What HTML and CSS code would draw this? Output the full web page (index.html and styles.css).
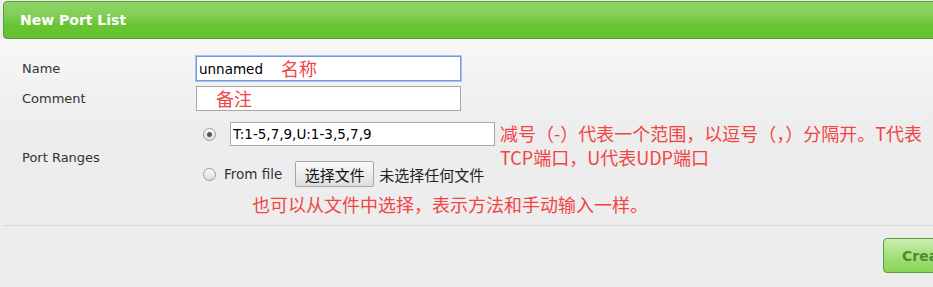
FILE: index.html
```html
<!DOCTYPE html>
<html lang="en">
<head>
  <meta charset="UTF-8" />
  <meta name="viewport" content="width=device-width, initial-scale=1.0" />
  <title>New Port List</title>
  <link rel="stylesheet" href="styles.css">
</head>
<body>
  <div class="panel-head">
    <h2 class="heading">New Port List</h2>
  </div>
  <div class="panel-body">
    <div class="form-row">
      <label class="form-label">Name</label>
      <div class="form-field">
        <input type="text" class="text-input focused" value="unnamed" />
        <span class="note note-name">名称</span>
      </div>
    </div>
    <div class="form-row">
      <label class="form-label">Comment</label>
      <div class="form-field">
        <input type="text" class="text-input" value="" />
        <span class="note note-comment">备注</span>
      </div>
    </div>
    <div class="form-row port-row">
      <label class="form-label port-label">Port Ranges</label>
      <div class="form-field">
        <div class="choice">
          <input type="radio" name="from" class="radio" checked />
          <input type="text" class="text-input port-input" value="T:1-5,7,9,U:1-3,5,7,9" />
          <span class="note note-port">减号（-）代表一个范围，以逗号（，）分隔开。T代表<br />TCP端口，U代表UDP端口</span>
        </div>
        <div class="choice file-choice">
          <input type="radio" name="from" class="radio" />
          <span class="choice-text">From file</span>
          <button class="file-btn">选择文件</button>
          <span class="file-name">未选择任何文件</span>
        </div>
        <div class="note note-file">也可以从文件中选择，表示方法和手动输入一样。</div>
      </div>
    </div>
    <div class="actions">
      <button class="btn-create">Create</button>
    </div>
  </div>
</body>
</html>
```

FILE: styles.css
```css
html, body {
  margin: 0;
  height: 100%;
  overflow: hidden;
}
body {
  font-family: "DejaVu Sans", sans-serif;
  font-size: 13px;
  color: #333;
  background: #ededed;
  padding-top: 1px;
}
.panel-head {
  margin-left: 3px;
  width: 960px;
  height: 36px;
  border: 1px solid #5a9a3b;
  border-radius: 4px;
  background: linear-gradient(#8fd466 0%, #82cf58 35%, #68c432 65%, #63c22e 100%);
  display: flex;
  align-items: center;
}
.heading {
  margin: 0 0 0 16px;
  font-size: 14px;
  font-weight: bold;
  color: #fff;
}
.panel-body {
  background: linear-gradient(#f8f8f8 0px, #f1f1f1 50px, #ededed 90px);
  padding-top: 17px;
}
.form-row {
  display: flex;
  align-items: center;
  margin-bottom: 5px;
}
.form-label {
  width: 196px;
  padding-left: 22px;
  box-sizing: border-box;
  flex-shrink: 0;
}
.form-field {
  position: relative;
}
.text-input {
  width: 265px;
  height: 25px;
  box-sizing: border-box;
  border: 1px solid #a9a9a9;
  background: #fff;
  font-family: "DejaVu Sans", sans-serif;
  font-size: 13.5px;
  color: #000;
  padding: 0 2px;
  margin: 0;
  outline: none;
}
.text-input.focused {
  border-color: #6e9ae6;
  box-shadow: 0 0 0 1px #a8c3f2;
}
.note {
  font-family: "Noto Sans CJK SC", sans-serif;
  font-size: 18px;
  line-height: 24px;
  color: #f24444;
  white-space: nowrap;
}
.note-name {
  position: absolute;
  left: 85px;
  top: 0;
}
.note-comment {
  position: absolute;
  left: 20px;
  top: 0;
}
.port-row {
  align-items: flex-start;
  margin-top: 11px;
}
.port-label {
  padding-top: 28px;
}
.choice {
  display: flex;
  align-items: center;
  position: relative;
}
.radio {
  appearance: none;
  -webkit-appearance: none;
  width: 13px;
  height: 13px;
  margin: 0 14px 0 7px;
  border: 1px solid #9a9a9a;
  border-radius: 50%;
  background: linear-gradient(#fdfdfd, #dcdcdc);
  box-sizing: border-box;
  position: relative;
}
.radio:checked::after {
  content: "";
  position: absolute;
  left: 3px;
  top: 3px;
  width: 5px;
  height: 5px;
  border-radius: 50%;
  background: #555;
}
.port-input {
  height: 24px;
}
.note-port {
  position: absolute;
  left: 304px;
  top: -1px;
}
.file-choice {
  margin-top: 15px;
}
.file-choice .radio {
  margin-right: 8px;
}
.choice-text {
  color: #333;
  font-size: 13.5px;
}
.file-btn {
  margin-left: 13px;
  width: 79px;
  height: 26px;
  border: 1px solid #a6a6a6;
  border-radius: 2px;
  background: linear-gradient(#fafafa, #dedede);
  font-family: "Noto Sans CJK SC", sans-serif;
  font-size: 15px;
  color: #111;
  padding: 0;
}
.file-name {
  margin-left: 5px;
  font-family: "Noto Sans CJK SC", sans-serif;
  font-size: 15px;
  color: #222;
}
.note-file {
  margin: 5px 0 0 56px;
}
.actions {
  margin: 9px 0 0 3px;
  border-top: 1px solid #d9d9d9;
  display: flex;
  justify-content: flex-end;
  padding-top: 12px;
}
.btn-create {
  width: 100px;
  height: 35px;
  margin-right: -50px;
  border: 1px solid #5f9a3f;
  border-radius: 4px;
  background: linear-gradient(#cdeeb2, #a5e07a 50%, #8ad457);
  font-family: "DejaVu Sans", sans-serif;
  font-size: 14px;
  font-weight: bold;
  color: #4f8a33;
  text-align: left;
  padding-left: 18px;
}
```
